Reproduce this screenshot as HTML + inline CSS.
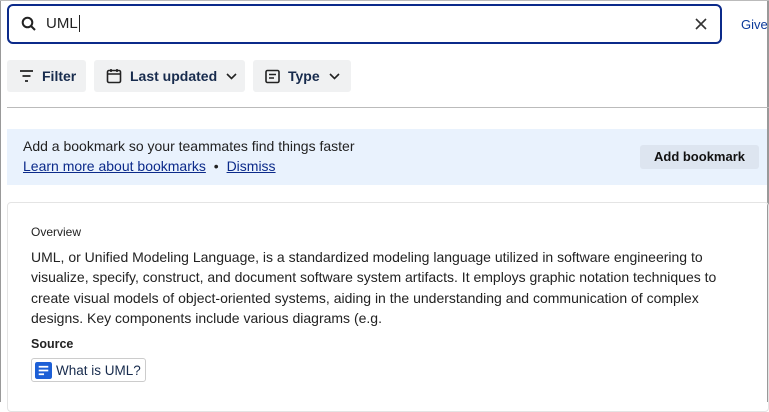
<!DOCTYPE html><html><head><style>
*{margin:0;padding:0;box-sizing:border-box}
body{width:769px;height:402px;overflow:hidden;background:#fff;font-family:"Liberation Sans",sans-serif;color:#172b4d;position:relative}
.a{position:absolute}
.search{left:7px;top:4px;width:715px;height:40px;border:2px solid #0b2a8a;border-radius:6px}
.btn{top:60px;height:32px;background:#f0f1f2;border-radius:3px;font-weight:bold;font-size:14px;display:flex;align-items:center;color:#172b4d}
.p{white-space:nowrap}
</style></head><body>
<div class="a" style="left:0;top:0;width:1px;height:402px;background:#999"></div>
<div class="a" style="left:767px;top:0;width:2px;height:402px;background:#999"></div>
<div class="a" style="left:0;top:0;width:769px;height:1px;background:#bbb"></div>
<div class="a search">
<svg class="a" style="left:12px;top:10px" width="16" height="16" viewBox="0 0 16 16"><circle cx="6.5" cy="6.5" r="4.8" fill="none" stroke="#222" stroke-width="2"/><path d="M10 10l4 4" stroke="#222" stroke-width="2"/></svg>
<div class="a" style="left:37px;top:9px;font-size:15px;color:#222">UML<span style="border-left:1px solid #222;margin-left:1px"></span></div>
<svg class="a" style="left:686px;top:12px" width="12" height="12" viewBox="0 0 12 12"><path d="M1 1l10 10M11 1L1 11" stroke="#333" stroke-width="1.6"/></svg>
</div>
<div class="a" style="left:741px;top:17px;font-size:13px;color:#0b3a9a">Give</div>
<div class="a btn" style="left:7px;width:79px"><svg style="margin:0 8px 0 12px" width="15" height="14" viewBox="0 0 15 14"><path d="M1 2h13M3.5 7h8M6 12h3" stroke="#222" stroke-width="1.8"/></svg>Filter</div>
<div class="a btn" style="left:94px;width:151px"><svg style="margin:0 8px 0 12px" width="16" height="16" viewBox="0 0 16 16"><rect x="1.5" y="2.5" width="13" height="12" rx="1.5" fill="none" stroke="#222" stroke-width="1.6"/><path d="M1.5 6h13M5 1v3M11 1v3" stroke="#222" stroke-width="1.6"/></svg>Last updated<svg style="margin-left:9px" width="11" height="7" viewBox="0 0 11 7"><path d="M1 1l4.5 4.5L10 1" fill="none" stroke="#222" stroke-width="1.6"/></svg></div>
<div class="a btn" style="left:253px;width:98px"><svg style="margin:0 8px 0 12px" width="15" height="15" viewBox="0 0 15 15"><rect x="1" y="1.5" width="13" height="12" rx="1.5" fill="none" stroke="#222" stroke-width="1.6"/><path d="M4 5.5h7M4 9h5" stroke="#222" stroke-width="1.6"/></svg>Type<svg style="margin-left:9px" width="11" height="7" viewBox="0 0 11 7"><path d="M1 1l4.5 4.5L10 1" fill="none" stroke="#222" stroke-width="1.6"/></svg></div>
<div class="a" style="left:7px;top:107px;width:762px;height:1px;background:#bbb"></div>
<div class="a" style="left:7px;top:129px;width:760px;height:56px;background:#e9f2fd"></div>
<div class="a p" style="left:23px;top:138px;font-size:14px;color:#222">Add a bookmark so your teammates find things faster</div>
<div class="a p" style="left:23px;top:158px;font-size:14px;color:#0b2a8a"><u>Learn more about bookmarks</u> <span style="margin:0 4px;color:#222">•</span> <u>Dismiss</u></div>
<div class="a" style="left:640px;top:145px;width:119px;height:24px;background:#dde5f0;border-radius:3px;font-weight:bold;font-size:13px;color:#111;text-align:center;line-height:24px">Add bookmark</div>
<div class="a" style="left:7px;top:202px;width:762px;height:210px;border:1px solid #e4e4e4;border-radius:4px"></div>
<div class="a" style="left:31px;top:225px;font-size:12px;color:#222">Overview</div>
<div class="a p" style="left:31px;top:247px;font-size:14px;line-height:20.3px;color:#222">UML, or Unified Modeling Language, is a standardized modeling language utilized in software engineering to<br>visualize, specify, construct, and document software system artifacts. It employs graphic notation techniques to<br>create visual models of object-oriented systems, aiding in the understanding and communication of complex<br>designs. Key components include various diagrams (e.g.</div>
<div class="a" style="left:31px;top:337px;font-size:12.5px;font-weight:bold;color:#222">Source</div>
<div class="a" style="left:31px;top:358px;width:115px;height:24px;border:1px solid #ccc;border-radius:3px;font-size:13.5px;color:#172b4d;display:flex;align-items:center;white-space:nowrap"><svg style="margin:0 4px 0 3px;flex:none" width="17" height="17" viewBox="0 0 16 16"><rect width="16" height="16" rx="2" fill="#1d5fd6"/><path d="M3.5 4.5h9M3.5 8h9M3.5 11.5h5" stroke="#fff" stroke-width="1.6"/></svg>What is UML?</div>
</body></html>
